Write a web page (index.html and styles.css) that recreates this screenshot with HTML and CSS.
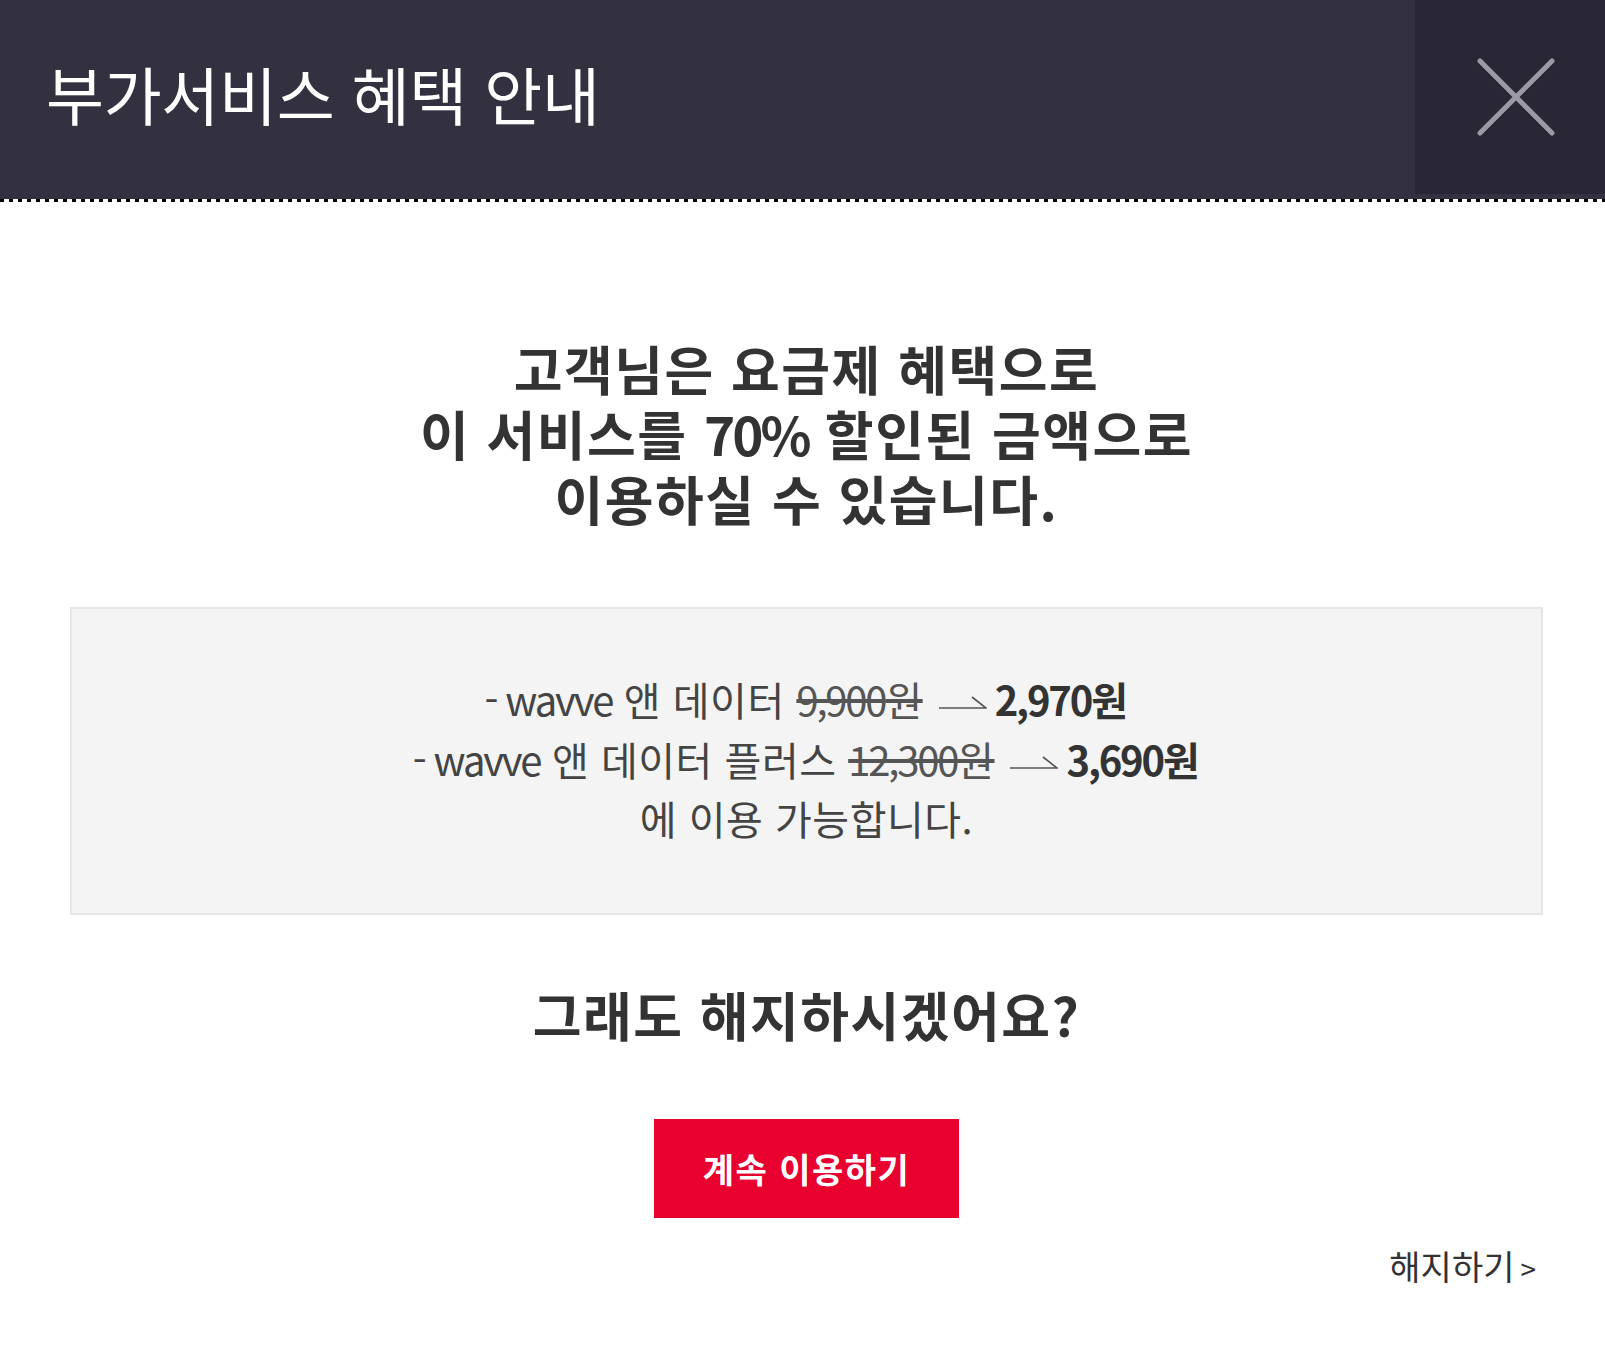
FILE: index.html
```html
<!DOCTYPE html>
<html lang="ko">
<head>
<meta charset="utf-8">
<title>부가서비스 혜택 안내</title>
<link rel="stylesheet" href="styles.css">
</head>
<body>
<div class="popup">
  <header class="popup-header">
    <h1 class="popup-title">부가서비스 혜택 안내</h1>
    <button class="close-btn" type="button" aria-label="닫기">
      <svg width="78" height="78" viewBox="0 0 78 78"><path d="M3 3 L75 75 M75 3 L3 75" stroke="#9b99a4" stroke-width="5" stroke-linecap="round" fill="none"/></svg>
    </button>
  </header>
  <div class="dots"></div>
  <main class="popup-body">
    <p class="lead">고객님은 요금제 혜택으로<br>이 서비스를 <span class="pct">70%</span> 할인된 금액으로<br>이용하실 수 있습니다.</p>
    <div class="benefit-box">
      <p class="benefit-line"><span class="lat">- wavve</span> 앤 데이터 <del><span class="lat">9,900</span>원</del><svg class="arrow" width="48" height="16" viewBox="0 0 48 16"><path d="M0 14 H47 L33 3" stroke="#555" stroke-width="1.6" fill="none"/></svg><strong><span class="lat">2,970</span>원</strong></p>
      <p class="benefit-line"><span class="lat">- wavve</span> 앤 데이터 플러스 <del><span class="lat">12,300</span>원</del><svg class="arrow" width="48" height="16" viewBox="0 0 48 16"><path d="M0 14 H47 L33 3" stroke="#555" stroke-width="1.6" fill="none"/></svg><strong><span class="lat">3,690</span>원</strong></p>
      <p class="benefit-line">에 이용 가능합니다.</p>
    </div>
    <p class="question">그래도 해지하시겠어요?</p>
    <div class="actions">
      <button class="continue-btn" type="button">계속 이용하기</button>
    </div>
    <div class="cancel-row">
      <a class="cancel-link" href="#">해지하기<span class="chev">&gt;</span></a>
    </div>
  </main>
</div>
</body>
</html>
```

FILE: styles.css
```css
html, body {
  margin: 0;
  padding: 0;
  background: #ffffff;
}

body {
  font-family: "Noto Sans CJK KR", "Noto Sans", sans-serif;
  color: #333333;
}

.popup-header {
  display: flex;
  align-items: flex-start;
  justify-content: space-between;
  height: 199px;
  background: #33303f;
}

.popup-title {
  margin: 0;
  align-self: center;
  padding: 0 0 14px 46px;
  font-size: 63px;
  font-weight: 400;
  line-height: 1;
  color: #ffffff;
  letter-spacing: -0.3px;
}

.close-btn {
  display: flex;
  align-items: center;
  justify-content: center;
  width: 190px;
  height: 194px;
  padding: 0 0 0 12px;
  border: 0;
  background: #292636;
  cursor: pointer;
}

.dots {
  height: 3px;
  background: repeating-linear-gradient(to right, #000000 0 4px, transparent 4px 9px);
}

.popup-body {
  padding: 134px 62px 60px 70px;
}

.lead {
  margin: 0;
  text-align: center;
  font-size: 53px;
  font-weight: 700;
  line-height: 65px;
  color: #333333;
  letter-spacing: 1.5px;
}

.lead .pct {
  letter-spacing: -3px;
}

.benefit-box {
  margin-top: 76px;
  padding: 61px 0 64px;
  background: #f4f4f4;
  border: 2px solid #e6e6e6;
  text-align: center;
}

.benefit-line {
  margin: 0;
  font-size: 40px;
  line-height: 59.5px;
  color: #444444;
  letter-spacing: 0.5px;
}

.benefit-line .lat {
  letter-spacing: -2.2px;
}

.benefit-line del {
  color: #555555;
}

.benefit-line strong {
  font-weight: 700;
  color: #333333;
}

.arrow {
  margin: 0 8px 0 16px;
  vertical-align: 6px;
}

.question {
  margin: 67px 0 0;
  text-align: center;
  font-size: 53px;
  font-weight: 700;
  line-height: 65px;
  color: #333333;
  letter-spacing: 1.5px;
}

.actions {
  display: flex;
  justify-content: center;
  margin-top: 72px;
}

.continue-btn {
  width: 305px;
  height: 99px;
  border: 0;
  background: #e8002f;
  color: #ffffff;
  font-family: inherit;
  font-size: 34px;
  font-weight: 700;
  letter-spacing: 1.5px;
  cursor: pointer;
}

.cancel-row {
  display: flex;
  justify-content: flex-end;
  margin-top: 28px;
  padding-right: 7px;
}

.cancel-link {
  font-size: 34px;
  line-height: 40px;
  color: #333333;
  text-decoration: none;
}

.cancel-link .chev {
  margin-left: 6px;
  font-size: 28px;
}
```
